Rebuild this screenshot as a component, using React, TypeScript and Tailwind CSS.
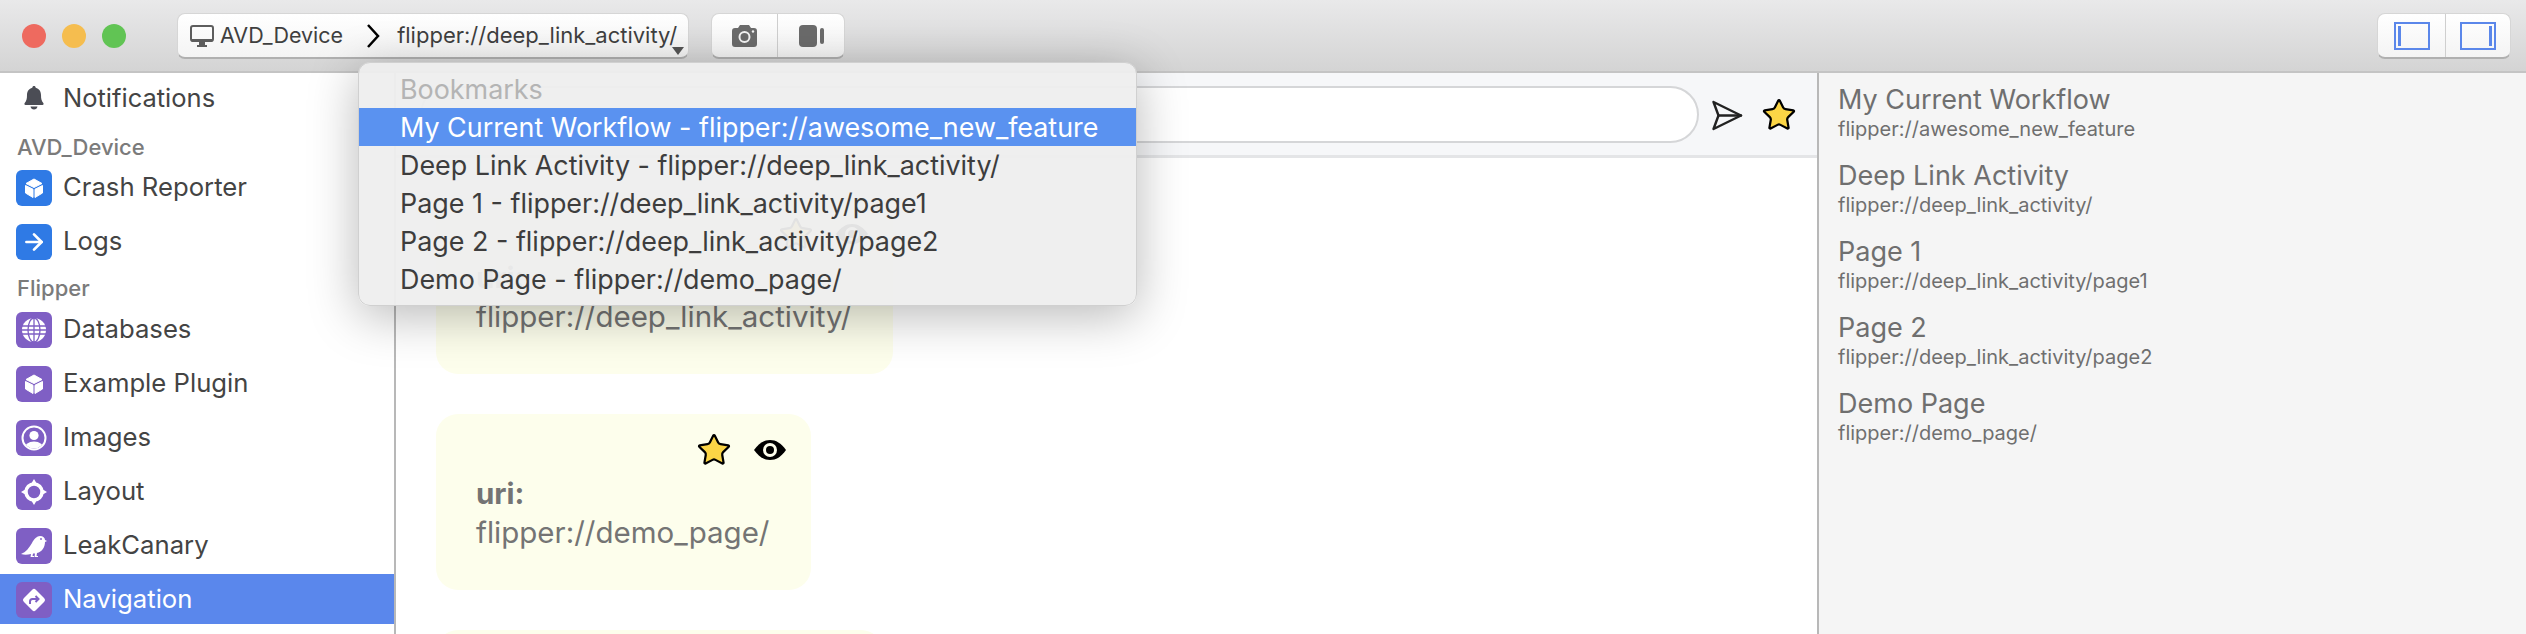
import { ArrowRight, Star } from 'lucide-react';
import type { ReactNode } from 'react';

const CubeIcon = () => (
  <svg width="24" height="24" viewBox="0 0 24 24" fill="#fff" stroke="#fff" strokeWidth="1" strokeLinejoin="round">
    <path d="M12 3 20 7.500 12 11.500 4 7.500Z" />
    <path d="M3.500 9.500 11 13.200V21.500L3.500 17Z" />
    <path d="M20.500 9.500 13 13.200V21.500L20.500 17Z" />
  </svg>
);

const GlobeIcon = () => (
  <svg width="26" height="26" viewBox="0 0 26 26">
    <circle cx="13" cy="13" r="12" fill="#fff" />
    <g fill="none" stroke="#7f5fc4" strokeWidth="1.300">
      <path d="M1 9h24M1 13h24M1 17h24M13 1v24" />
      <ellipse cx="13" cy="13" rx="6" ry="12" />
    </g>
  </svg>
);

const PersonIcon = () => (
  <svg width="26" height="26" viewBox="0 0 26 26">
    <defs>
      <clipPath id="ring">
        <circle cx="13" cy="13" r="10.500" />
      </clipPath>
    </defs>
    <circle cx="13" cy="13" r="11.500" fill="none" stroke="#fff" strokeWidth="2" />
    <circle cx="13" cy="10.500" r="4.600" fill="#fff" />
    <ellipse cx="13" cy="24" rx="10" ry="7.500" fill="#fff" clipPath="url(#ring)" />
  </svg>
);

const TargetIcon = () => (
  <svg width="26" height="26" viewBox="0 0 26 26" fill="#fff">
    <circle cx="13" cy="13" r="8" fill="none" stroke="#fff" strokeWidth="3.500" />
    <path d="M13 0 16 5H10ZM13 26 10 21H16ZM0 13 5 10V16ZM26 13 21 16V10Z" />
  </svg>
);

const BirdIcon = () => (
  <svg width="26" height="24" viewBox="0 0 26 24" fill="#fff">
    <path d="M0 20C5 18 8 14 11 9 13 5 16 2 19 2 22 2 24 4 24 6L26 7 24 8C24 13 21 18 16 19L15.500 22H17V23H13.500L14 19.500 12 19.500 11.500 22H13V23H9.500L10 20C6 21 3 21 0 20Z" />
    <circle cx="20" cy="5" r="0.900" fill="#7f5fc4" />
  </svg>
);

const DirectionsIcon = () => (
  <svg width="26" height="26" viewBox="0 0 26 26">
    <rect x="4.500" y="4.500" width="17" height="17" rx="2.500" fill="#fff" transform="rotate(45 13 13)" />
    <path d="M9 17v-2.500c0-1.500 1-2.500 2.500-2.500H17M14.500 9l3 3-3 3" fill="none" stroke="#7f5fc4" strokeWidth="2" />
  </svg>
);

const BellIcon = () => (
  <svg width="22" height="24" viewBox="0 0 22 24" fill="#4b4d55">
    <path d="M11 0c1 0 1.600.7 1.700 1.700C16 2.500 18 5.300 18 9c0 4 .6 6 2.300 8 .7.900.3 2-.8 2H2.500c-1.100 0-1.500-1.100-.8-2C3.400 15 4 13 4 9c0-3.700 2-6.500 5.300-7.300C9.400.7 10 0 11 0Z" />
    <path d="M7.500 20.500h7C14.200 22.500 12.800 23.500 11 23.500S7.800 22.500 7.500 20.500Z" />
  </svg>
);

const MonitorIcon = () => (
  <svg width="24" height="22" viewBox="0 0 24 22" fill="none">
    <rect x="1" y="1" width="22" height="15" rx="2" stroke="#5d5d5d" strokeWidth="2" />
    <path d="M1 14h22v1a2 2 0 0 1-2 2H3a2 2 0 0 1-2-2Z" fill="#5d5d5d" />
    <path d="M9 17h6v3h2v2H7v-2h2Z" fill="#5d5d5d" />
  </svg>
);

const CameraIcon = () => (
  <svg width="25" height="22" viewBox="0 0 25 22">
    <path d="M8 0h9l2 3h3a3 3 0 0 1 3 3v13a3 3 0 0 1-3 3H3a3 3 0 0 1-3-3V6a3 3 0 0 1 3-3h3Z" fill="#6b6b6b" />
    <circle cx="12.500" cy="12" r="5" fill="none" stroke="#f4f4f4" strokeWidth="2" />
    <circle cx="21" cy="6.500" r="1.200" fill="#f4f4f4" />
  </svg>
);

const VideoIcon = () => (
  <svg width="25" height="22" viewBox="0 0 25 22" fill="#6b6b6b">
    <rect x="0" y="0" width="18" height="22" rx="4" />
    <rect x="21" y="3" width="4" height="16" rx="2" />
  </svg>
);

const SendIcon = () => (
  <svg width="32" height="31" viewBox="0 0 32 31" fill="none" stroke="#222" strokeWidth="2.400" strokeLinejoin="round" strokeLinecap="round">
    <path d="M2.500 2 30 15.500 2.500 29 7.500 15.500Z" />
    <path d="M7.500 15.500H30" />
  </svg>
);

const EyeIcon = () => (
  <svg width="32" height="20" viewBox="0 0 32 20">
    <path d="M0 10C5 3 10 0 16 0s11 3 16 10c-5 7-10 10-16 10S5 17 0 10Z" fill="#000" />
    <circle cx="16" cy="10" r="7" fill="#fdfeec" />
    <circle cx="16" cy="10" r="4" fill="#000" />
  </svg>
);

const YellowStar = () => (
  <Star size={36} fill="#fbd546" stroke="#000" strokeWidth={1.500} />
);

const PanelIcon = ({ side }: { side: 'left' | 'right' }) => (
  <div className={`flex h-[28px] w-[36px] border-2 border-[#5b87ea] p-[2px] ${side === 'right' ? 'justify-end' : 'justify-start'}`}>
    <div className="h-full w-[3px] bg-[#5b87ea]" />
  </div>
);

interface PluginRowProps {
  label: string;
  color: string;
  icon: ReactNode;
  selected?: boolean;
}

function PluginRow({ label, color, icon, selected }: PluginRowProps) {
  return (
    <div className={selected ? 'mt-px flex h-[50px] items-center gap-[11px] bg-[#5a87ec] pl-[16px] pt-[2px] text-white' : 'flex h-[54px] items-center gap-[11px] pl-[16px] text-[#444]'}>
      <div className={`flex h-[36px] w-[36px] items-center justify-center rounded-[6px] ${color}`}>{icon}</div>
      <span className="mb-[2px] text-[25.7px] leading-none">{label}</span>
    </div>
  );
}

function Card({ uri }: { uri: string }) {
  return (
    <div className="rounded-[22px] bg-[#fdfeec] pb-[38px] pl-[40px] pr-[25px] pt-[21px] text-[29.5px] text-[#747474]">
      <div className="mb-[8px] flex h-[30px] items-center justify-end gap-[22px]">
        <YellowStar />
        <EyeIcon />
      </div>
      <div className="h-[39px] font-bold leading-[40px]">uri:</div>
      <div className="h-[40px] pr-[17px] leading-[40px]">{uri}</div>
    </div>
  );
}

const bookmarks = [
  { title: 'My Current Workflow', uri: 'flipper://awesome_new_feature' },
  { title: 'Deep Link Activity', uri: 'flipper://deep_link_activity/' },
  { title: 'Page 1', uri: 'flipper://deep_link_activity/page1' },
  { title: 'Page 2', uri: 'flipper://deep_link_activity/page2' },
  { title: 'Demo Page', uri: 'flipper://demo_page/' },
];

export default function App() {
  return (
    <div className="relative flex h-[634px] w-[2526px] flex-col overflow-hidden bg-white font-[Inter,sans-serif]">
      <header className="flex h-[73px] shrink-0 items-start justify-between border-b-2 border-[#c4c4c4] bg-gradient-to-b from-[#e9e9ea] to-[#d4d4d4] pl-[22px] pr-[15px] pt-[13px]">
        <div className="flex items-center">
          <div className="mt-[11px] flex gap-[16px]">
            <div className="h-[24px] w-[24px] rounded-full bg-[#ee6a5f]" />
            <div className="h-[24px] w-[24px] rounded-full bg-[#f5bd4f]" />
            <div className="h-[24px] w-[24px] rounded-full bg-[#61c454]" />
          </div>
        </div>
        <div className="ml-[51px] flex flex-1 gap-[22px]">
          <div className="relative flex h-[46px] w-[512px] items-center rounded-[8px] border border-b-2 border-[#d6d6d6] border-b-[#b0b0b0] bg-gradient-to-b from-white to-[#f4f4f4] pl-[12px] text-[22px] text-[#3f3f3f]">
            <MonitorIcon />
            <span className="ml-[6px] text-[21.5px]">AVD_Device</span>
            <svg width="14" height="24" viewBox="0 0 14 24" className="ml-[23px]" fill="none" stroke="#000" strokeWidth="2.500">
              <path d="M2 1 12 12 2 23" />
            </svg>
            <span className="ml-[17px]">flipper://deep_link_activity/</span>
            <svg width="12" height="8" viewBox="0 0 12 8" className="absolute bottom-[2px] right-[4px]" fill="#555">
              <path d="M0 0h12L6 8Z" />
            </svg>
          </div>
          <div className="flex h-[46px] w-[134px] rounded-[8px] border border-b-2 border-[#d6d6d6] border-b-[#b0b0b0] bg-gradient-to-b from-white to-[#f4f4f4]">
            <div className="flex w-[66px] items-center justify-center border-r border-[#cfcfcf]"><CameraIcon /></div>
            <div className="flex flex-1 items-center justify-center"><VideoIcon /></div>
          </div>
        </div>
        <div className="flex h-[46px] w-[134px] rounded-[8px] border border-b-2 border-[#d6d6d6] border-b-[#b0b0b0] bg-gradient-to-b from-white to-[#f4f4f4]">
          <div className="flex w-[68px] items-center justify-center border-r border-[#cfcfcf]"><PanelIcon side="left" /></div>
          <div className="flex flex-1 items-center justify-center"><PanelIcon side="right" /></div>
        </div>
      </header>

      <div className="flex min-h-0 flex-1">
        <aside className="w-[396px] shrink-0 border-r-2 border-[#b8b8b8] bg-white">
          <div className="flex h-[50px] items-center gap-[18px] pl-[23px] text-[25.5px] text-[#444]">
            <BellIcon />
            <span className="leading-none">Notifications</span>
          </div>
          <div className="h-[38px] pl-[17px] pt-[10px] text-[22px] font-medium leading-[28px] text-[#7b7b7b]">AVD_Device</div>
          <PluginRow label="Crash Reporter" color="bg-[#2f7ae5]" icon={<CubeIcon />} />
          <PluginRow label="Logs" color="bg-[#2f7ae5]" icon={<ArrowRight size={26} color="#fff" strokeWidth={2.500} />} />
          <div className="h-[34px] pl-[17px] pt-[5px] text-[22px] font-medium leading-[28px] text-[#7b7b7b]">Flipper</div>
          <PluginRow label="Databases" color="bg-[#7f5fc4]" icon={<GlobeIcon />} />
          <PluginRow label="Example Plugin" color="bg-[#7f5fc4]" icon={<CubeIcon />} />
          <PluginRow label="Images" color="bg-[#7f5fc4]" icon={<PersonIcon />} />
          <PluginRow label="Layout" color="bg-[#7f5fc4]" icon={<TargetIcon />} />
          <PluginRow label="LeakCanary" color="bg-[#7f5fc4]" icon={<BirdIcon />} />
          <PluginRow label="Navigation" color="bg-[#7f5fc4]" icon={<DirectionsIcon />} selected />
        </aside>

        <main className="min-w-0 flex-1 overflow-hidden bg-white">
          <div className="flex h-[85px] items-center border-b-[3px] border-[#e4e5e7] bg-[#f6f7f9] pl-[24px] pr-[20px]">
            <div className="h-[57px] flex-1 rounded-full border-2 border-[#d5d6d8] bg-white" />
            <div className="ml-[12px] mt-[2px]"><SendIcon /></div>
            <div className="ml-[18px] mt-[2px]"><Star size={36} fill="#fbd546" stroke="#000" strokeWidth={1.500} /></div>
          </div>
          <div className="flex flex-col items-start gap-[40px] pl-[40px] pt-[40px]">
            <Card uri="flipper://deep_link_activity/" />
            <Card uri="flipper://demo_page/" />
            <div className="h-[176px] w-[447px] rounded-[22px] bg-[#fdfeec]" />
          </div>
        </main>

        <aside className="w-[709px] shrink-0 border-l-2 border-[#b8b8b8] bg-[#f5f5f5] pl-[19px] pt-[8px]">
          {bookmarks.map(b => (
            <div key={b.title} className="h-[76px] pt-[2px]">
              <div className="text-[27px] leading-[34px] text-[#6f6f6f]">{b.title}</div>
              <div className="text-[20px] leading-[24px] text-[#6f6f6f]">{b.uri}</div>
            </div>
          ))}
        </aside>
      </div>

      <div className="absolute left-[358px] top-[62px] h-[244px] w-[779px] rounded-[12px] border border-[#d0d0d0] bg-[#eeeeee]/95 py-[7px] text-[26.9px] text-[#3d3d3d] shadow-[0_10px_50px_rgba(0,0,0,0.28)]">
        <div className="flex h-[38px] items-center pl-[41px] text-[#b4b4b4]">Bookmarks</div>
        <div className="flex h-[38px] items-center bg-[#5a92f0] pl-[41px] text-white">My Current Workflow - flipper://awesome_new_feature</div>
        <div className="flex h-[38px] items-center pl-[41px]">Deep Link Activity - flipper://deep_link_activity/</div>
        <div className="flex h-[38px] items-center pl-[41px]">Page 1 - flipper://deep_link_activity/page1</div>
        <div className="flex h-[38px] items-center pl-[41px]">Page 2 - flipper://deep_link_activity/page2</div>
        <div className="flex h-[38px] items-center pl-[41px]">Demo Page - flipper://demo_page/</div>
      </div>
    </div>
  );
}
